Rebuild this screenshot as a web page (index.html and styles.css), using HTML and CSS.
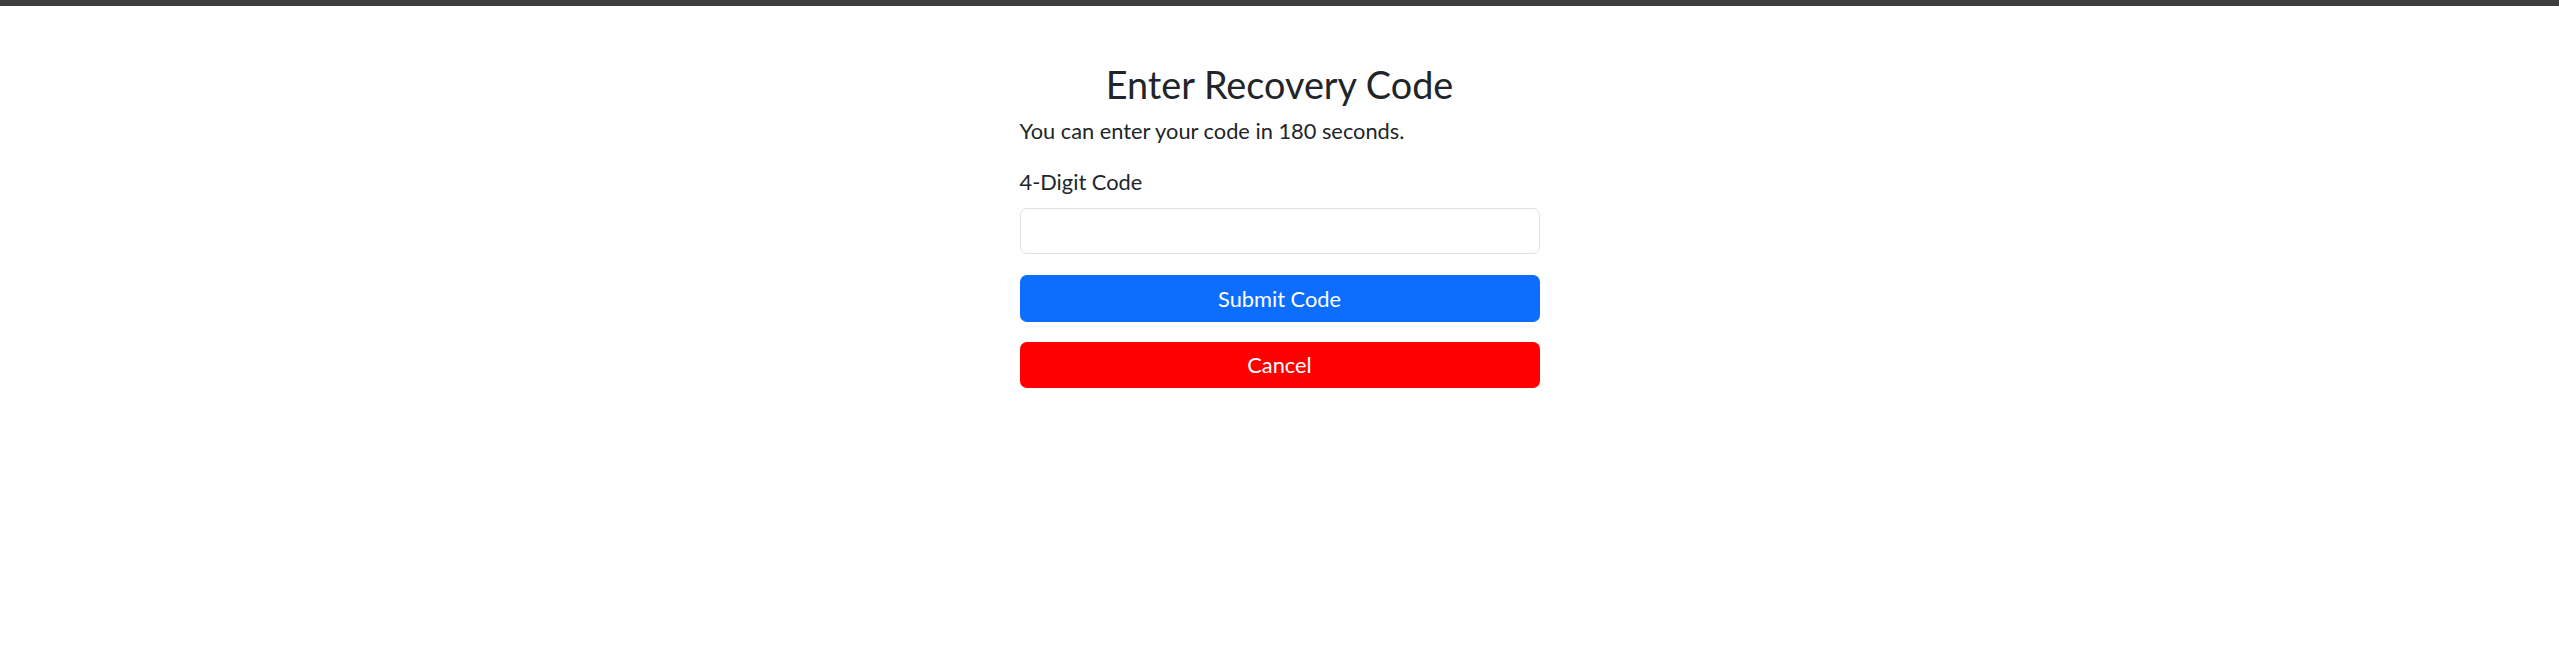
FILE: index.html
```html
<!DOCTYPE html>
<html lang="en">
<head>
<meta charset="utf-8">
<title>Enter Recovery Code</title>
<link rel="stylesheet" href="styles.css">
</head>
<body>
<header class="topbar"></header>
<main class="page">
  <form class="recovery">
    <h2 class="title">Enter Recovery Code</h2>
    <p class="note">You can enter your code in 180 seconds.</p>
    <label class="label" for="code">4-Digit Code</label>
    <input class="input" id="code" type="text">
    <button class="btn btn-submit" type="button">Submit Code</button>
    <button class="btn btn-cancel" type="button">Cancel</button>
  </form>
</main>
</body>
</html>
```
FILE: styles.css
```css
html, body {
  margin: 0;
  padding: 0;
  background: #ffffff;
}
body {
  font-family: Lato, "Open Sans", sans-serif;
  color: #212529;
}
.topbar {
  height: 6px;
  background: #3d3d3d;
}
.page {
  display: flex;
  justify-content: center;
  padding-top: 56px;
}
.recovery {
  width: 520px;
  display: flex;
  flex-direction: column;
}
.title {
  margin: 0;
  font-size: 37.8px;
  font-weight: 400;
  line-height: 45px;
  text-align: center;
}
.note {
  margin: 8px 0 0;
  font-size: 21.8px;
  line-height: 32px;
}
.label {
  margin-top: 19px;
  font-size: 21.8px;
  line-height: 32px;
}
.input {
  margin: 10px 0 0;
  box-sizing: border-box;
  height: 46px;
  width: 100%;
  border: 1px solid #dee2e6;
  border-radius: 7px;
  background: #fff;
  font-family: inherit;
  font-size: 21.8px;
  padding: 0 14px;
  outline: none;
}
.btn {
  box-sizing: border-box;
  width: 100%;
  border: 0;
  border-radius: 7px;
  color: #fff;
  font-family: inherit;
  font-size: 21.8px;
  line-height: 32px;
  padding: 0;
  display: flex;
  align-items: center;
  justify-content: center;
}
.btn-submit {
  margin-top: 21px;
  height: 47px;
  background: #0d6efd;
}
.btn-cancel {
  margin-top: 20px;
  height: 46px;
  background: #ff0000;
}
```
